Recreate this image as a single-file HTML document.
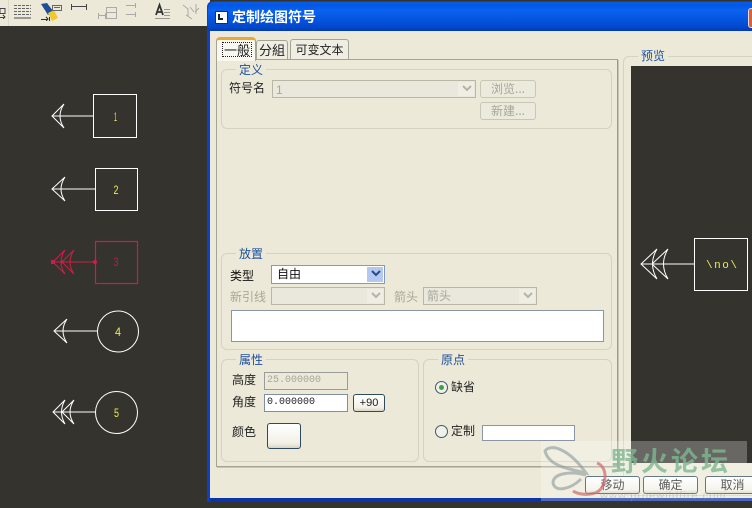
<!DOCTYPE html>
<html><head><meta charset="utf-8">
<style>
html,body{margin:0;padding:0;background:#35332e;}
#r{position:relative;width:752px;height:508px;overflow:hidden;background:#35332e;font:12px/14px "WenQuanYi Zen Hei","Noto Sans CJK SC","Liberation Sans",sans-serif;color:#222;}
#r div{position:absolute;box-sizing:border-box;}
.t{white-space:nowrap;}
.dis{color:#a8a698;}
.g{border:1px solid #d6d2c0;border-radius:6px;}
.lb{color:#1c4f9c;background:#ece9d8;padding:0 3px;white-space:nowrap;}
.cb{border:1px solid #b9b6a6;background:#eae8dc;}
.cb.on{border-color:#7f9db9;background:#fff;}
.ar{right:1px;top:1px;bottom:1px;width:16px;background:#f0eee4;}
.btn{border:1px solid #c9c6b4;border-radius:3px;background:#eceadd;text-align:center;color:#a8a698;}
.b2{border:1px solid #2f4a5c;border-radius:3px;background:linear-gradient(#fff,#f2f0e6 80%,#d8d4c4);text-align:center;color:#222;}
</style></head><body><div id="r">
<!-- toolbar -->
<div style="left:0;top:0;width:210px;height:26px;background:#ece9d8"></div>
<svg style="position:absolute;left:0;top:0" width="210" height="26" fill="none" stroke-width="1" shape-rendering="crispEdges">
<path d="M8.500 0V26" stroke="#dcd9ca"/>
<path d="M0 8.500h5v5H0zM0 17.500h5M3 15l2 2-2 2" stroke="#444"/>
<path d="M14 5.500h17M14 8.500h17M14 11.500h17M14 14.500h17" stroke="#666" stroke-dasharray="3 1"/>
<path d="M14 18h17" stroke="#999" stroke-width="2"/>
<path d="M41 4L47 3 53 11 48 15Z" fill="#1f4f96" stroke="none" shape-rendering="auto"/>
<path d="M48 13L54 10 58 18 52 21Z" fill="#f0c830" stroke="none" shape-rendering="auto"/>
<path d="M52.500 5.500h9v5h-9zM54 7.500h6" stroke="#666"/>
<path d="M41 19.500h7M46 17l2 2-2 2M49.500 17v4" stroke="#333"/>
<path d="M71.500 4v6M86.500 4v6M72 6.500h14" stroke="#444"/>
<path d="M98.500 13v6M105.500 13v6M98 15.500h8M106.500 7.500h10v11h-10zM106 12.500h11" stroke="#aaa"/>
<path d="M126 5.500h9M135.500 3v5M126 14.500h9M135.500 12v5" stroke="#aaa"/>
<path d="M156 15l3.500-10 3.500 10M157 12h5" stroke="#333" stroke-width="1.800" shape-rendering="auto"/>
<path d="M155 18.500h15M164 9.500h6M164 12.500h6M164 15.500h6" stroke="#999"/>
<path d="M183 5l5 4v7M190 7l4 5M196 4v10M186 15l6 4M199 8l-4 4" stroke="#aaa" shape-rendering="auto"/>
</svg>

<!-- drawing symbols -->
<svg style="position:absolute;left:0;top:0" width="207" height="508" fill="none" stroke="#fff" stroke-width="1">
<rect x="93.500" y="94.500" width="43" height="43"/>
<path d="M52 116H93M64 104L52 116 64 128M64 104Q56 116 64 128"/>
<rect x="95.500" y="168.500" width="42" height="42"/>
<path d="M52 189H95M65 177L52 189 65 201M65 177Q57 189 65 201"/>
<g stroke="#d01c48">
<rect x="95.500" y="241.500" width="42" height="42" stroke-width="1.200"/>
<path d="M53 262H95M65 250L53 262 65 274M65 250Q57 262 65 274M74 250L62 262 74 274M74 250Q66 262 74 274"/>
<rect x="51" y="260" width="4" height="4" fill="#d01c48" stroke="none"/>
<circle cx="62" cy="262" r="1.500" fill="#d01c48" stroke="none"/><circle cx="95" cy="262" r="2" fill="#d01c48" stroke="none"/>
</g>
<circle cx="118" cy="331.500" r="20.500"/>
<path d="M54 331H97M67 319L54 331 67 343M67 319Q59 331 67 343"/>
<circle cx="116.500" cy="412.500" r="21"/>
<path d="M53 412H95M65 400L53 412 65 424M65 400Q58 412 65 424M74 400L62 412 74 424M74 400Q66 412 74 424"/>
<g fill="#ecec50" stroke="none" font-family="Liberation Sans" font-size="12">
<text x="114" y="121" textLength="3" lengthAdjust="spacingAndGlyphs">1</text>
<text x="113.500" y="194" textLength="5" lengthAdjust="spacingAndGlyphs">2</text>
<text x="113.500" y="266" textLength="5" lengthAdjust="spacingAndGlyphs" fill="#b8203c">3</text>
<text x="115" y="336" textLength="6" lengthAdjust="spacingAndGlyphs">4</text>
<text x="114" y="417" textLength="5" lengthAdjust="spacingAndGlyphs">5</text>
</g>
</svg>

<!-- dialog -->
<div style="left:207px;top:1px;width:560px;height:501px;background:#0f3fc8;border-radius:6px 6px 0 0"></div>
<div style="left:208px;top:2px;width:560px;height:29px;border-radius:6px 6px 0 0;background:linear-gradient(#0a5ce0,#0058e6 12%,#0a62ee 30%,#0455e0 60%,#0346c8 90%,#023aa8)"></div>
<div style="left:210px;top:31px;width:560px;height:467px;background:#ece9d8"></div>
<div style="left:210px;top:498px;width:560px;height:4px;background:#0b34a8"></div>
<div style="left:215px;top:11px;width:13px;height:13px;background:#fff;border:1px solid #1a2a60"></div>
<div style="left:218px;top:14px;width:5px;height:6px;border-left:2px solid #123;border-bottom:2px solid #123"></div>
<div class="t" style="left:232px;top:9px;color:#fff;font-size:14px;line-height:17px;font-weight:bold;letter-spacing:0">定制绘图符号</div>
<div style="left:748px;top:8px;width:8px;height:20px;background:#d8603c;border:1px solid #f0d8cc;border-radius:3px"></div>

<!-- tabs -->
<div style="left:216px;top:59px;width:402px;height:408px;background:#ece9d8;border:1px solid #a5a393;border-right-color:#999;box-shadow:1px 1px 0 #c8c5b4"></div>
<div style="left:216px;top:37px;width:40px;height:24px;background:#f8f7f0;border:1px solid #a5a393;border-top:3px solid #e8a838;border-bottom:0;border-radius:4px 4px 0 0"></div>
<div class="t" style="left:222px;top:42px;border:1px dotted #222;padding:0 1px;height:15px;line-height:13px;font-size:13px;color:#222">一般</div>
<div class="t" style="left:256px;top:40px;width:32px;height:20px;background:#f0eee2;border:1px solid #a5a393;border-radius:3px 3px 0 0;text-align:center;line-height:18px;font-size:13px">分組</div>
<div class="t" style="left:290px;top:39px;width:59px;height:21px;background:#f0eee2;border:1px solid #a5a393;border-radius:3px 3px 0 0;text-align:center;line-height:19px;font-size:12px">可变文本</div>

<!-- def group -->
<div class="g" style="left:221px;top:69px;width:391px;height:60px"></div>
<div class="lb" style="left:236px;top:63px">定义</div>
<div class="t" style="left:229px;top:81px">符号名</div>
<div class="cb" style="left:272px;top:80px;width:204px;height:18px"><div class="t dis" style="left:3px;top:2px;font-family:'Liberation Sans'">1</div><div class="ar"></div><div style="right:3px;top:3px;width:10px;height:10px"><svg width="10" height="10" style="display:block"><path d="M1 2l4 4 4-4" fill="none" stroke="#b5b3a6" stroke-width="2"/></svg></div></div>
<div class="btn" style="left:480px;top:80px;width:56px;height:18px;line-height:16px">浏览...</div>
<div class="btn" style="left:480px;top:102px;width:56px;height:18px;line-height:16px">新建...</div>

<!-- placement -->
<div class="g" style="left:221px;top:253px;width:391px;height:97px"></div>
<div class="lb" style="left:236px;top:247px">放置</div>
<div class="t" style="left:230px;top:269px;color:#111">类型</div>
<div class="cb on" style="left:271px;top:265px;width:114px;height:19px"><div class="t" style="left:5px;top:1px;color:#111">自由</div><div class="ar" style="background:#b4c8f0"></div><div class="t" style="right:3px;top:3px;width:10px;height:10px"><svg width="10" height="10" style="display:block"><path d="M1 2l4 4 4-4" fill="none" stroke="#2a4a8a" stroke-width="2"/></svg></div></div>
<div class="t dis" style="left:230px;top:290px">新引线</div>
<div class="cb" style="left:271px;top:287px;width:114px;height:18px"><div class="ar"></div><div style="right:3px;top:3px;width:10px;height:10px"><svg width="10" height="10" style="display:block"><path d="M1 2l4 4 4-4" fill="none" stroke="#b5b3a6" stroke-width="2"/></svg></div></div>
<div class="t dis" style="left:394px;top:290px">箭头</div>
<div class="cb" style="left:423px;top:287px;width:114px;height:18px"><div class="t dis" style="left:3px;top:1px">箭头</div><div class="ar"></div><div style="right:3px;top:3px;width:10px;height:10px"><svg width="10" height="10" style="display:block"><path d="M1 2l4 4 4-4" fill="none" stroke="#b5b3a6" stroke-width="2"/></svg></div></div>
<div style="left:231px;top:310px;width:373px;height:32px;background:#fff;border:1px solid #8a96a8"></div>

<!-- props -->
<div class="g" style="left:221px;top:359px;width:198px;height:103px"></div>
<div class="lb" style="left:236px;top:353px">属性</div>
<div class="t" style="left:232px;top:373px">高度</div>
<div class="t dis" style="left:267px;top:374px;font-family:'Liberation Mono';font-size:10px">25.000000</div>
<div style="left:264px;top:372px;width:84px;height:18px;border:1px solid #9a9c9c"></div>
<div class="t" style="left:232px;top:395px">角度</div>
<div style="left:264px;top:394px;width:84px;height:18px;background:#fff;border:1px solid #7f8f9f"></div>
<div class="t" style="left:267px;top:396px;font-family:'Liberation Mono';font-size:10px;color:#222">0.000000</div>
<div class="b2" style="left:353px;top:394px;width:32px;height:18px;font-family:'Liberation Sans';line-height:16px;font-size:11px">+90</div>
<div class="t" style="left:232px;top:425px">颜色</div>
<div class="b2" style="left:267px;top:423px;width:34px;height:26px"></div>

<!-- origin -->
<div class="g" style="left:423px;top:359px;width:189px;height:103px"></div>
<div class="lb" style="left:438px;top:353px">原点</div>
<div style="left:435px;top:381px;width:13px;height:13px;border:1px solid #3a5a6a;border-radius:50%;background:#f0f0e8"></div>
<div style="left:439px;top:385px;width:5px;height:5px;border-radius:50%;background:#3ea04a"></div>
<div class="t" style="left:451px;top:380px">缺省</div>
<div style="left:435px;top:425px;width:13px;height:13px;border:1px solid #3a5a6a;border-radius:50%;background:#f0f0e8"></div>
<div class="t" style="left:451px;top:424px">定制</div>
<div style="left:482px;top:425px;width:93px;height:16px;background:#fff;border:1px solid #8a96a8"></div>

<!-- preview -->
<div class="g" style="left:623px;top:56px;width:140px;height:440px"></div>
<div class="lb" style="left:638px;top:49px">预览</div>
<div style="left:631px;top:66px;width:121px;height:397px;background:#35332e"></div>
<svg style="position:absolute;left:631px;top:230px" width="121" height="70" fill="none" stroke="#fff">
<rect x="63.500" y="8.500" width="53" height="52"/>
<path d="M10 34H63M26 19L10 34 26 49M26 19Q17 34 26 49M37 19L21 34 37 49M37 19Q28 34 37 49"/>
<text x="75" y="38" fill="#ecec50" stroke="none" font-family="Liberation Mono" font-size="11" textLength="31" lengthAdjust="spacing">\no\</text>
</svg>

<!-- buttons -->
<div class="b2" style="left:585px;top:476px;width:55px;height:18px;line-height:16px">移动</div>
<div class="b2" style="left:643px;top:476px;width:55px;height:18px;line-height:16px">确定</div>
<div class="b2" style="left:705px;top:476px;width:55px;height:18px;line-height:16px">取消</div>

<!-- watermark -->
<div style="left:541px;top:441px;width:206px;height:60px;background:rgba(255,255,255,.26)"></div>
<div style="left:747px;top:463px;width:5px;height:38px;background:rgba(255,255,255,.26)"></div>
<svg style="position:absolute;left:541px;top:441px" width="70" height="60" fill="none" stroke-width="3">
<path d="M4 10C10 2 28 8 45 32 30 28 8 26 4 10ZM45 34C30 30 12 32 12 42 14 52 30 48 40 38" stroke="#8a9a9a" opacity=".6"/>
<path d="M56 22C68 26 66 48 54 52 48 54 38 54 32 50" stroke="#d07070" opacity=".75"/>
</svg>
<div class="t" style="left:611px;top:446px;font-size:27px;line-height:28px;font-weight:bold;letter-spacing:3px;color:#7fb892;opacity:.8">野火论坛</div>
<div class="t" style="left:600px;top:490px;font:11px/12px 'Liberation Sans',sans-serif;letter-spacing:1px;color:#8a9a9a;opacity:.35">www.proewildfire.com</div>
</div></body></html>
